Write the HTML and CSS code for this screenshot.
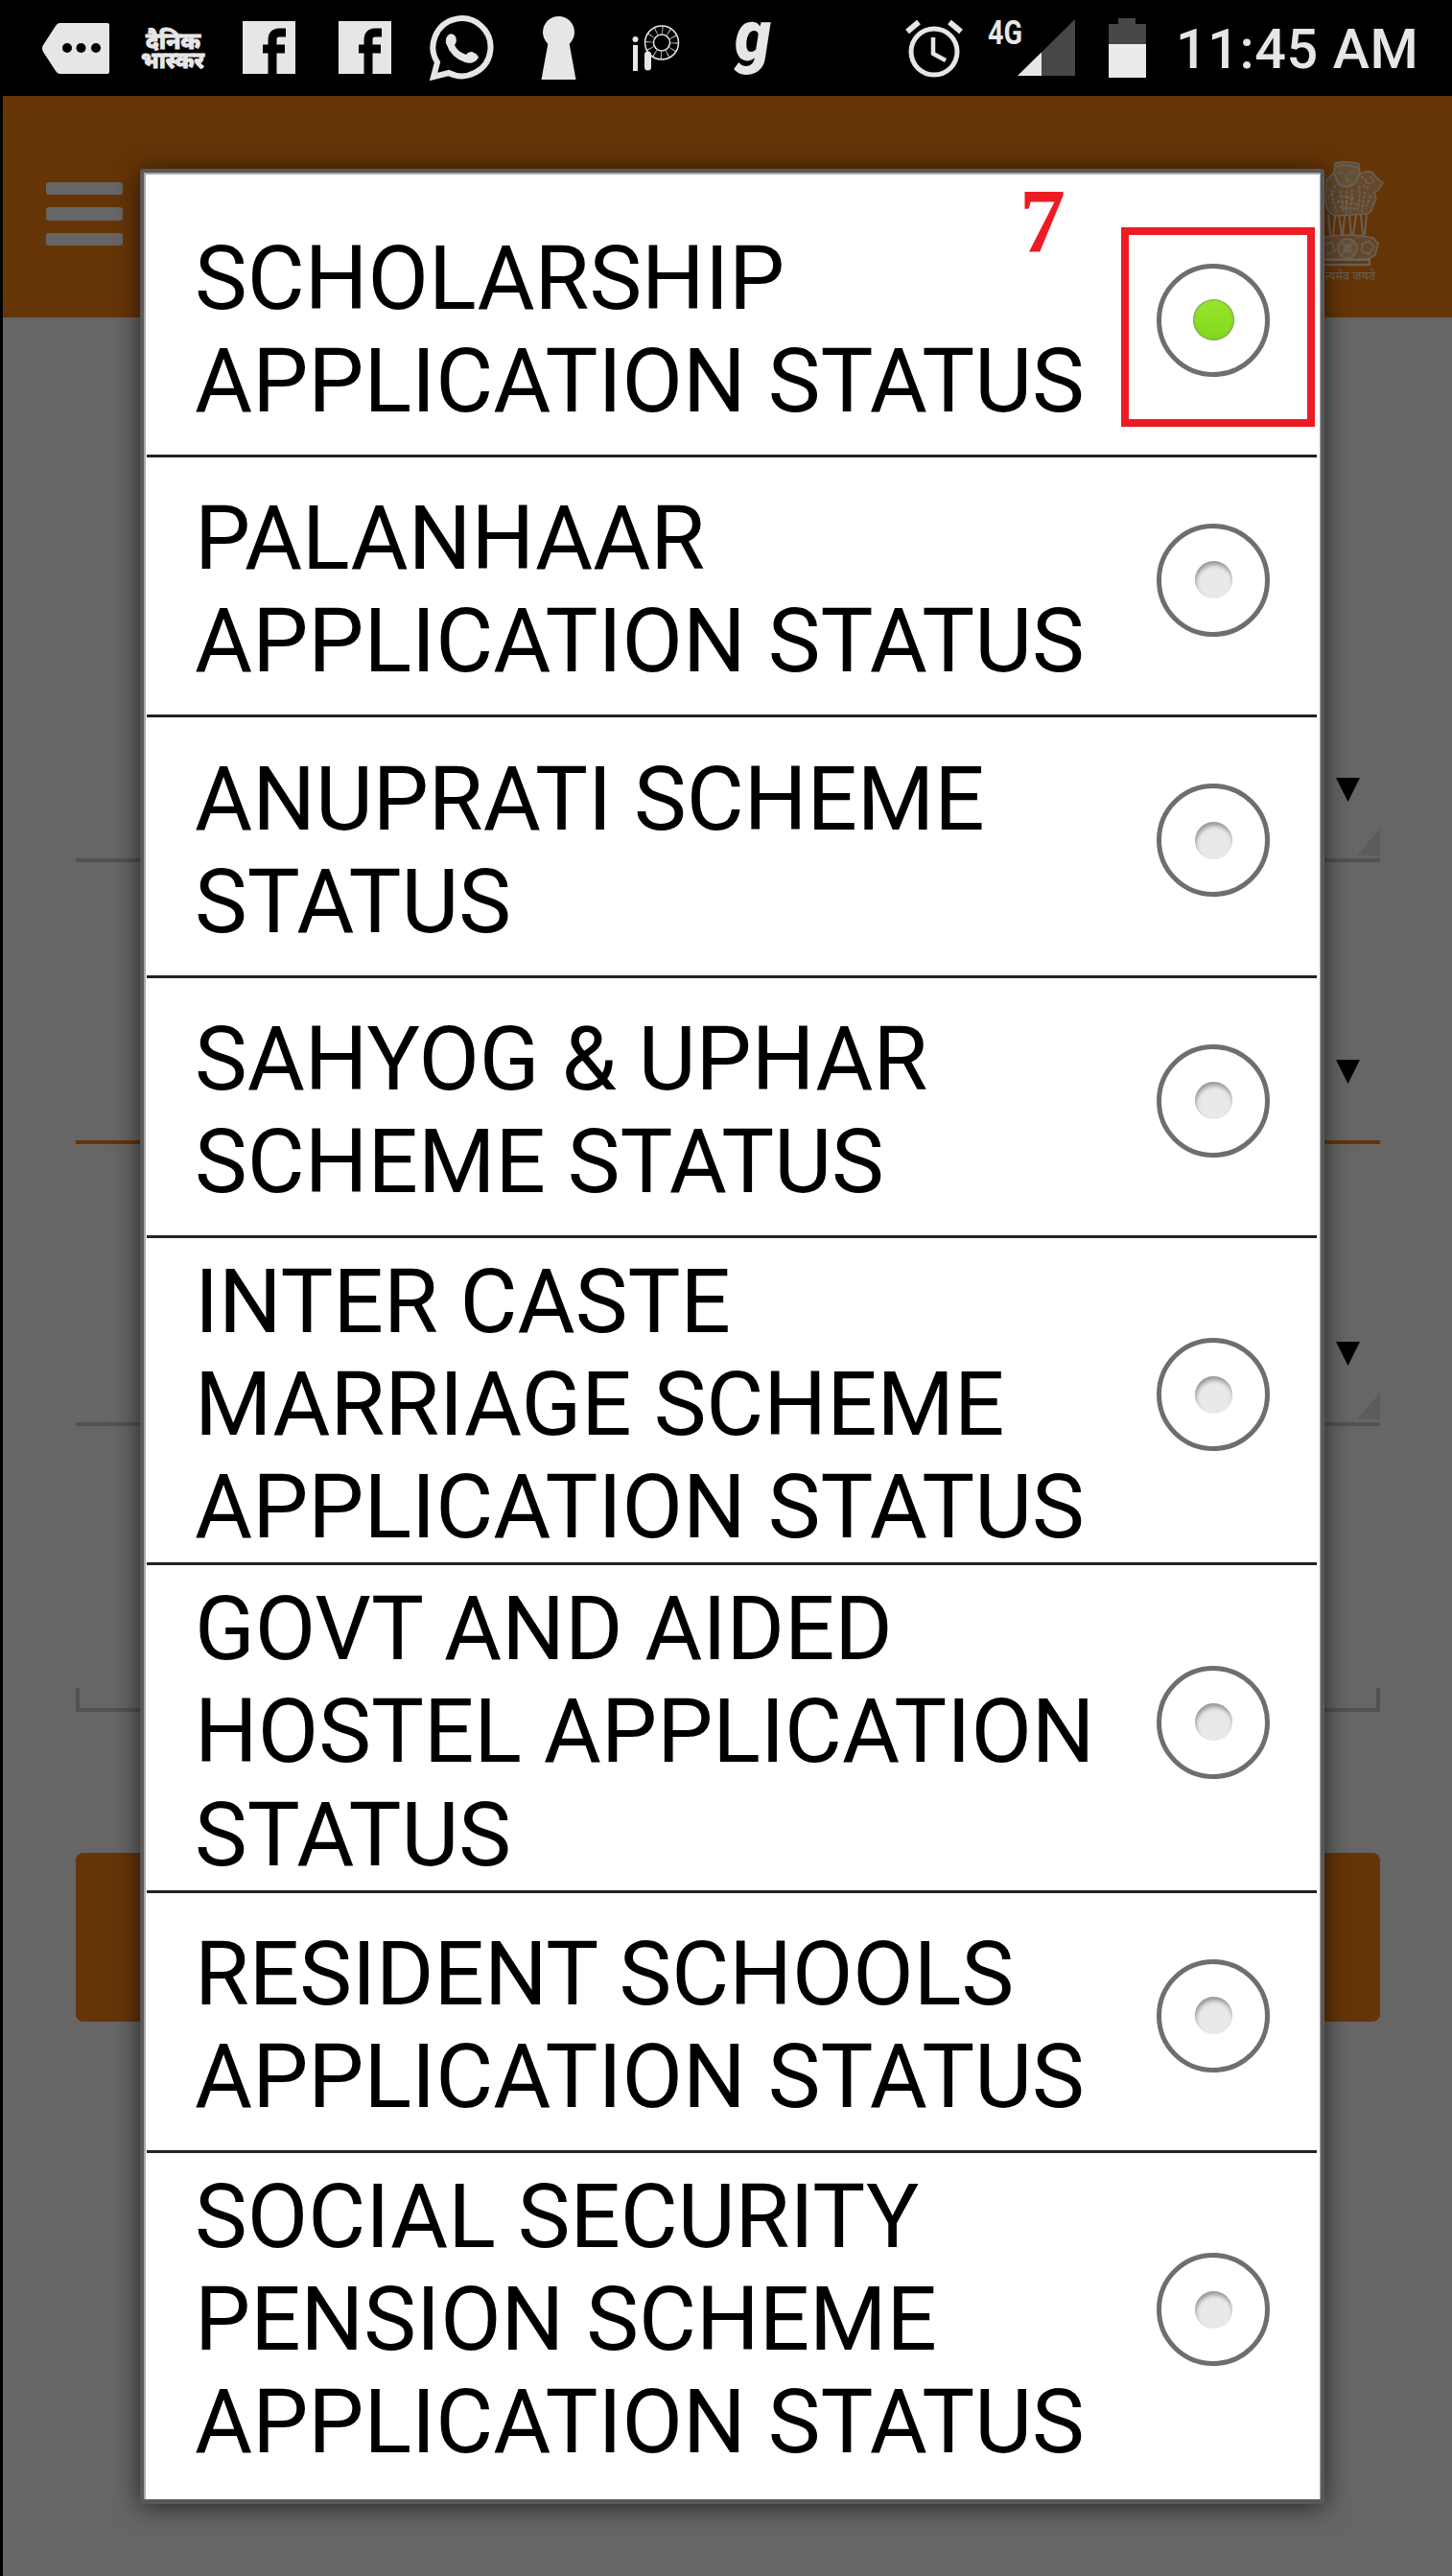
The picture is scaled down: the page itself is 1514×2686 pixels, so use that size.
FILE: index.html
```
<!DOCTYPE html>
<html lang="en">
<head>
  <meta charset="UTF-8">
  <meta name="viewport" content="width=device-width, initial-scale=1">
  <title>Application Status</title>
  <link rel="stylesheet" href="styles.css">
</head>
<body>
  <!-- Android status bar -->
  <div class="status-bar">
    <div class="notifications">
      <svg width="100" height="100" viewBox="0 0 100 100">
        <path fill="#e6e6e6" d="M33 24H83Q85 24 85 26V75Q85 77 83 77H33Q31 77 29 74L16 54Q14 50 16 47L29 27Q31 24 33 24Z"/>
        <circle cx="41" cy="50" r="5"/><circle cx="55.500" cy="50" r="5"/><circle cx="71" cy="50" r="5"/>
      </svg>
      <svg width="100" height="100" viewBox="0 0 100 100" class="hindi">
        <text x="22" y="51" textLength="57" lengthAdjust="spacingAndGlyphs">दैनिक</text>
        <text x="17" y="71" textLength="66" lengthAdjust="spacingAndGlyphs">भास्कर</text>
      </svg>
      <svg width="100" height="100" viewBox="0 0 100 100">
        <rect x="22" y="22" width="55" height="55" fill="#e6e6e6"/>
        <path d="M53 77V42Q53 34 60 34H67" fill="none" stroke="#000" stroke-width="9"/>
        <path d="M43 51H66" stroke="#000" stroke-width="9"/>
      </svg>
      <svg width="100" height="100" viewBox="0 0 100 100">
        <rect x="22" y="22" width="55" height="55" fill="#e6e6e6"/>
        <path d="M53 77V42Q53 34 60 34H67" fill="none" stroke="#000" stroke-width="9"/>
        <path d="M43 51H66" stroke="#000" stroke-width="9"/>
      </svg>
      <svg width="100" height="100" viewBox="0 0 100 100">
        <path d="M20 80L24 65A30 30 0 1 1 36 76Z" fill="none" stroke="#e6e6e6" stroke-width="6"/>
        <path d="M36 36Q32 39 33 45Q38 60 53 65Q62 68 67 60Q66 56 60 54Q56 54 54 57Q45 54 42 47Q45 44 43 38Q40 34 36 36Z" fill="#e6e6e6"/>
      </svg>
      <svg width="100" height="100" viewBox="0 0 100 100" fill="#e6e6e6">
        <circle cx="49.500" cy="33.500" r="16.500"/>
        <path d="M39 42H60L67.500 83H31.500Z"/>
      </svg>
      <svg width="100" height="100" viewBox="0 0 100 100" fill="none" stroke="#e6e6e6">
        <circle cx="28.500" cy="41" r="3" fill="#e6e6e6" stroke="none"/>
        <path d="M28.500 47V74" stroke-width="5"/>
        <path d="M41.500 57V70" stroke-width="7" stroke-linecap="round"/>
        <circle cx="56" cy="44.500" r="17.500" stroke-width="1.500"/>
        <circle cx="56" cy="44.500" r="8.500" stroke-width="1.500"/>
        <circle cx="56" cy="44.500" r="13" stroke-width="8" stroke-dasharray="1 5.800" opacity=".8"/>
      </svg>
      <svg width="100" height="100" viewBox="0 0 100 100" class="g-logo">
        <text x="31" y="63" textLength="38" lengthAdjust="spacingAndGlyphs">g</text>
      </svg>
    </div>
    <div class="system">
      <svg class="alarm" width="60" height="62" viewBox="0 0 60 62" fill="none" stroke="#e6e6e6">
        <circle cx="30" cy="34" r="24" stroke-width="5"/>
        <path d="M29 19V36L42 43" stroke-width="4.500"/>
        <path d="M2 13L14 3M46 3L58 13" stroke-width="6"/>
      </svg>
      <svg class="signal" width="92" height="60" viewBox="0 0 92 60">
        <path d="M31 59L91 0V59Z" fill="#474747"/>
        <path d="M31 59L56 34.500V59Z" fill="#e6e6e6"/>
        <text x="0" y="26" textLength="36" lengthAdjust="spacingAndGlyphs">4G</text>
      </svg>
      <svg class="battery" width="39" height="62" viewBox="0 0 39 62">
        <path d="M0 6H10V0H28V6H39V28H0Z" fill="#474747"/>
        <path d="M0 27H39V62H0Z" fill="#ebebeb"/>
      </svg>
      <span class="clock">11:45 AM</span>
    </div>
  </div>

  <!-- App page behind the dialog -->
  <div class="header">
    <div class="menu"><span></span><span></span><span></span></div>
    <svg class="emblem" width="96" height="128" viewBox="0 0 96 128" fill="none" stroke="#68625a" stroke-width="1.500">
      <path d="M45 2Q58 -1 70 3L71 12L66 22Q58 31 48 22L44 12Z" fill="#665036"/>
      <path d="M48 12H54M60 12H66M57 13V20L61 21M51 24Q57 29 64 23M46 6Q57 2 69 7"/>
      <path d="M71 13Q82 7 87 16L95 23L90 30L86 33L88 39L85 46Q83 54 78 55L47 57Q36 55 35 42L36 20L44 12L48 24Q58 31 67 22Z" fill="#66482a"/>
      <path d="M72 16L79 21L75 26L82 29M82 16L85 21L80 24M70 26Q72 38 68 53M45 25L42 38L47 53M51 31L54 53M57 31V55M63 30L61 54M76 32L73 53M82 36L77 50M37 28L43 33L37 39M49 36L65 39M47 42L68 45M50 48L67 50" stroke-width="2" stroke-dasharray="3 1.500"/>
      <path d="M38 56L40 77M45 57L43 78M49 57L52 77M55 57L53 78M60 56L62 78M67 56L64 77M72 55L74 77M78 55L76 77" stroke-width="2"/>
      <path d="M30 80Q59 74 85 80L90 86L87 98L80 102H30Z" fill="#664629"/>
      <path d="M32 103H81V108H30" stroke-width="2.500"/>
      <circle cx="58" cy="91" r="10" fill="#665036"/><circle cx="58" cy="91" r="3"/>
      <path d="M51 84L65 98M65 84L51 98M73 87L80 83L86 89L80 97L73 94ZM34 87L42 84L45 94L36 97"/>
      <text x="26" y="124" textLength="61" lengthAdjust="spacingAndGlyphs">सत्यमेव जयते</text>
    </svg>
  </div>
  <div class="form">
    <div class="select"></div>
    <div class="select active"></div>
    <div class="select"></div>
    <div class="input"></div>
    <div class="submit"></div>
  </div>

  <!-- Service picker -->
  <div class="dialog">
    <div class="option selected"><span class="label">SCHOLARSHIP APPLICATION STATUS</span><span class="radio"></span></div>
    <div class="option"><span class="label">PALANHAAR APPLICATION STATUS</span><span class="radio"></span></div>
    <div class="option"><span class="label">ANUPRATI SCHEME STATUS</span><span class="radio"></span></div>
    <div class="option"><span class="label">SAHYOG &amp; UPHAR SCHEME STATUS</span><span class="radio"></span></div>
    <div class="option tall"><span class="label">INTER CASTE MARRIAGE SCHEME APPLICATION STATUS</span><span class="radio"></span></div>
    <div class="option tall"><span class="label">GOVT AND AIDED HOSTEL APPLICATION STATUS</span><span class="radio"></span></div>
    <div class="option"><span class="label">RESIDENT SCHOOLS APPLICATION STATUS</span><span class="radio"></span></div>
    <div class="option tall"><span class="label">SOCIAL SECURITY PENSION SCHEME APPLICATION STATUS</span><span class="radio"></span></div>
    <div class="step-number">7</div>
    <div class="highlight"></div>
  </div>
</body>
</html>
```
FILE: styles.css
```
* {
  box-sizing: border-box;
}

body {
  position: relative;
  margin: 0;
  height: 2686px;
  overflow: hidden;
  border-left: 3px solid #000;
  background: #666;
  font-family: Roboto, "Liberation Sans", sans-serif;
  color: #000;
}

svg {
  display: block;
  overflow: visible;
}

/* Status bar */
.status-bar {
  display: flex;
  justify-content: space-between;
  height: 100px;
  padding: 0 38px 0 26px;
  background: #000;
}

.notifications {
  display: grid;
  grid-template-columns: repeat(8, 100.8px);
}

.hindi text {
  font-family: "Noto Sans", "Noto Sans Devanagari", sans-serif;
  font-size: 24px;
  font-weight: 800;
  fill: #e6e6e6;
  stroke: #e6e6e6;
  stroke-width: 1px;
}

.g-logo text {
  font-size: 74px;
  font-weight: 900;
  font-style: italic;
  fill: #e6e6e6;
}

.system {
  display: flex;
}

.alarm {
  margin: 20px 26px 0 0;
}

.signal {
  margin: 20px 34px 0 0;
}

.signal text {
  font-size: 35px;
  font-weight: 700;
  fill: #e6e6e6;
}

.battery {
  margin: 19px 31px 0 0;
}

.clock {
  width: 250px;
  font-size: 57.5px;
  font-weight: 500;
  line-height: 104px;
  letter-spacing: 0.6px;
  white-space: nowrap;
  color: #e6e6e6;
}

/* Header */
.header {
  display: flex;
  justify-content: space-between;
  height: 231px;
  padding: 68px 71px 0 45px;
  background: #663507;
}

.menu {
  display: flex;
  flex-direction: column;
  gap: 13px;
  padding-top: 22px;
}

.menu span {
  width: 80px;
  height: 13.4px;
  border-radius: 3px;
  background: #666;
}

.emblem text {
  font-family: "Noto Sans", "Noto Sans Devanagari", sans-serif;
  font-size: 13px;
  fill: #68625a;
  stroke: none;
}

/* Form */
.form {
  padding: 274px 75px 0 76px;
}

.select {
  position: relative;
  height: 294px;
  border-bottom: 4px solid #525252;
}

.select::before {
  content: "";
  position: absolute;
  right: 21px;
  bottom: 59px;
  width: 25px;
  height: 25px;
  background: #000;
  clip-path: polygon(0 0, 100% 0, 50% 100%);
}

.select::after {
  content: "";
  position: absolute;
  right: 0;
  bottom: 3px;
  width: 24px;
  height: 28px;
  background: #5c5c5c;
  clip-path: polygon(100% 0, 100% 100%, 0 100%);
}

.select.active {
  border-color: #663507;
}

.select.active::after {
  display: none;
}

.input {
  height: 25px;
  margin-top: 273px;
  border: 4px solid #525252;
  border-top: none;
}

.submit {
  height: 176px;
  margin-top: 147px;
  border-radius: 8px;
  background: #663507;
}

/* Dialog */
.dialog {
  position: absolute;
  top: 176px;
  left: 143px;
  width: 1235px;
  height: 2435px;
  padding: 25.4px 5px 0 1px;
  border: 5px solid #595959;
  border-width: 4px 4px 5px;
  border-radius: 4px;
  background: #fff;
  box-shadow: inset 2px 2px 0 #aaa, inset -1px 0 0 #aaa, 0 3px 28px rgba(0, 0, 0, 0.65);
}

.option {
  display: flex;
  align-items: center;
  justify-content: space-between;
  width: 1220px;
  height: 271.4px;
  margin-left: 2px;
  padding: 0 49px 0 50px;
  border-bottom: 3px solid #222;
}

.option.tall {
  height: 341.4px;
}

.option:nth-child(8) {
  border-bottom-color: transparent;
}

.label {
  width: 950px;
  padding-top: 9px;
  font-size: 92.2px;
  line-height: 107.2px;
}

.radio {
  display: flex;
  align-items: center;
  justify-content: center;
  width: 118px;
  height: 118px;
  margin-bottom: 12px;
  border: 5px solid #6e6e6e;
  border-radius: 50%;
}

.radio::before {
  content: "";
  width: 39px;
  height: 39px;
  border-radius: 50%;
  background: #e9e9e9;
  box-shadow: inset 1px 4px 4px #999;
}

.selected .radio::before {
  width: 43px;
  height: 43px;
  background: linear-gradient(#98e62c, #80d81a);
  box-shadow: inset 0 0 2px 1px #8a9a78;
}

/* Step marker on top of the first option */
.step-number {
  position: absolute;
  top: 3px;
  left: 913px;
  font-family: "Liberation Serif", serif;
  font-size: 96px;
  font-weight: 700;
  line-height: 96px;
  color: #ed1c24;
}

.highlight {
  position: absolute;
  top: 57px;
  left: 1019px;
  width: 202px;
  height: 208px;
  border: 8px solid #ed1c24;
}
```
